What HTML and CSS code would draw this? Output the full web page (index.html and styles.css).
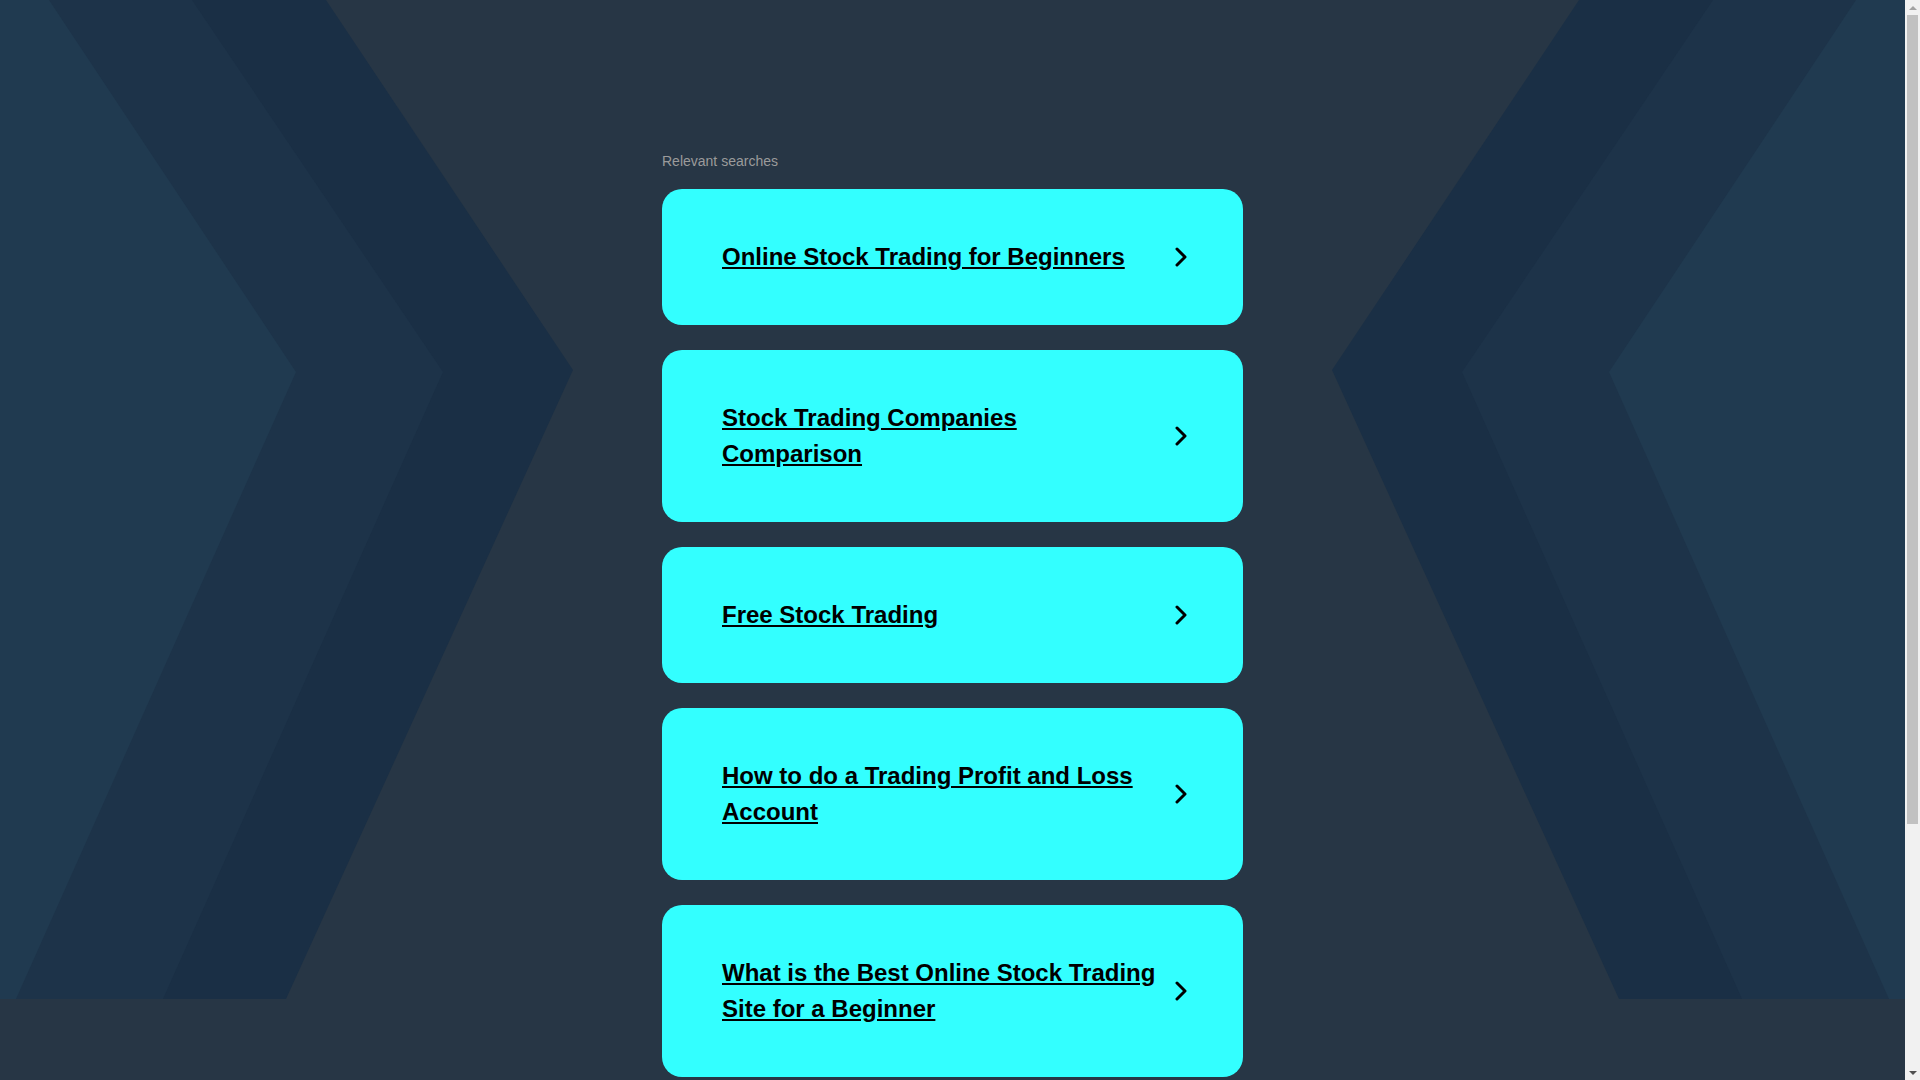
FILE: index.html
```html
<!DOCTYPE html>
<html lang="en">
<head>
<meta charset="utf-8">
<title>Relevant searches</title>
<link rel="stylesheet" href="styles.css">
</head>
<body>
<div class="backdrop">
  <svg class="backdrop-art" viewBox="0 0 1905 999" preserveAspectRatio="none" xmlns="http://www.w3.org/2000/svg">
    <polygon fill="#1a2f45" points="0,0 326,0 573,370 286,999 0,999"/>
    <polygon fill="#1d3349" points="0,0 192,0 443,372 163,999 0,999"/>
    <polygon fill="#203a50" points="0,0 49,0 296,372 16,999 0,999"/>
    <polygon fill="#1a2f45" points="1905,0 1579,0 1332,370 1619,999 1905,999"/>
    <polygon fill="#1d3349" points="1905,0 1713,0 1462,372 1742,999 1905,999"/>
    <polygon fill="#203a50" points="1905,0 1856,0 1609,372 1889,999 1905,999"/>
  </svg>
</div>
<main class="page">
  <section class="results">
    <p class="results-title">Relevant searches</p>
    <a class="result-card" href="#">
      <span class="result-text">Online Stock Trading for Beginners</span>
      <svg class="result-arrow" viewBox="0 0 12 20"><path d="M2 2 L10 10 L2 18"/></svg>
    </a>
    <a class="result-card" href="#">
      <span class="result-text">Stock Trading Companies Comparison</span>
      <svg class="result-arrow" viewBox="0 0 12 20"><path d="M2 2 L10 10 L2 18"/></svg>
    </a>
    <a class="result-card" href="#">
      <span class="result-text">Free Stock Trading</span>
      <svg class="result-arrow" viewBox="0 0 12 20"><path d="M2 2 L10 10 L2 18"/></svg>
    </a>
    <a class="result-card" href="#">
      <span class="result-text">How to do a Trading Profit and Loss Account</span>
      <svg class="result-arrow" viewBox="0 0 12 20"><path d="M2 2 L10 10 L2 18"/></svg>
    </a>
    <a class="result-card" href="#">
      <span class="result-text">What is the Best Online Stock Trading Site for a Beginner</span>
      <svg class="result-arrow" viewBox="0 0 12 20"><path d="M2 2 L10 10 L2 18"/></svg>
    </a>
  </section>
</main>
<div class="scrollbar" aria-hidden="true">
  <span class="scrollbar-btn scrollbar-up"></span>
  <span class="scrollbar-track"><span class="scrollbar-thumb"></span></span>
  <span class="scrollbar-btn scrollbar-down"></span>
</div>
</body>
</html>
```

FILE: styles.css
```css
html, body {
  margin: 0;
  padding: 0;
}

body {
  background: #273645;
  font-family: "Liberation Sans", Arial, sans-serif;
  color: #000;
}

.backdrop {
  position: absolute;
  top: 0;
  left: 0;
  width: calc(100% - 15px);
  height: 999px;
  z-index: 0;
  overflow: hidden;
}

.backdrop-art {
  display: block;
  width: 100%;
  height: 100%;
}

.page {
  position: relative;
  z-index: 1;
  padding: 151px 15px 323px 0;
}

.results {
  width: 581px;
  margin: 0 auto;
  display: flex;
  flex-direction: column;
  gap: 25px;
}

.results-title {
  margin: 0 0 -7px;
  font-size: 14px;
  line-height: 20px;
  color: #9b9b9b;
}

.result-card {
  display: flex;
  align-items: center;
  padding: 50px 56px 50px 60px;
  border-radius: 20px;
  background: #33ffff;
  color: #000;
  text-decoration: none;
}

.result-text {
  flex: 1;
  font-size: 24px;
  line-height: 36px;
  font-weight: bold;
  text-decoration: underline;
  color: #000;
}

.result-arrow {
  flex: none;
  width: 12px;
  height: 20px;
  margin-left: 18px;
}

.result-arrow path {
  fill: none;
  stroke: #000;
  stroke-width: 3;
  stroke-linecap: round;
  stroke-linejoin: round;
}

.scrollbar {
  position: fixed;
  top: 0;
  right: 0;
  bottom: 0;
  width: 15px;
  z-index: 2;
  background: #f1f1f1;
  display: flex;
  flex-direction: column;
}

.scrollbar-btn {
  flex: none;
  height: 15px;
  display: flex;
  align-items: center;
  justify-content: center;
}

.scrollbar-btn::before {
  content: "";
  width: 0;
  height: 0;
  border-left: 4px solid transparent;
  border-right: 4px solid transparent;
}

.scrollbar-up::before {
  border-bottom: 4px solid #a3a3a3;
}

.scrollbar-down::before {
  border-top: 4px solid #505050;
}

.scrollbar-track {
  flex: 1;
  padding: 0 2px;
  display: flex;
  flex-direction: column;
}

.scrollbar-thumb {
  height: 809px;
  background: #c1c1c1;
}
```
